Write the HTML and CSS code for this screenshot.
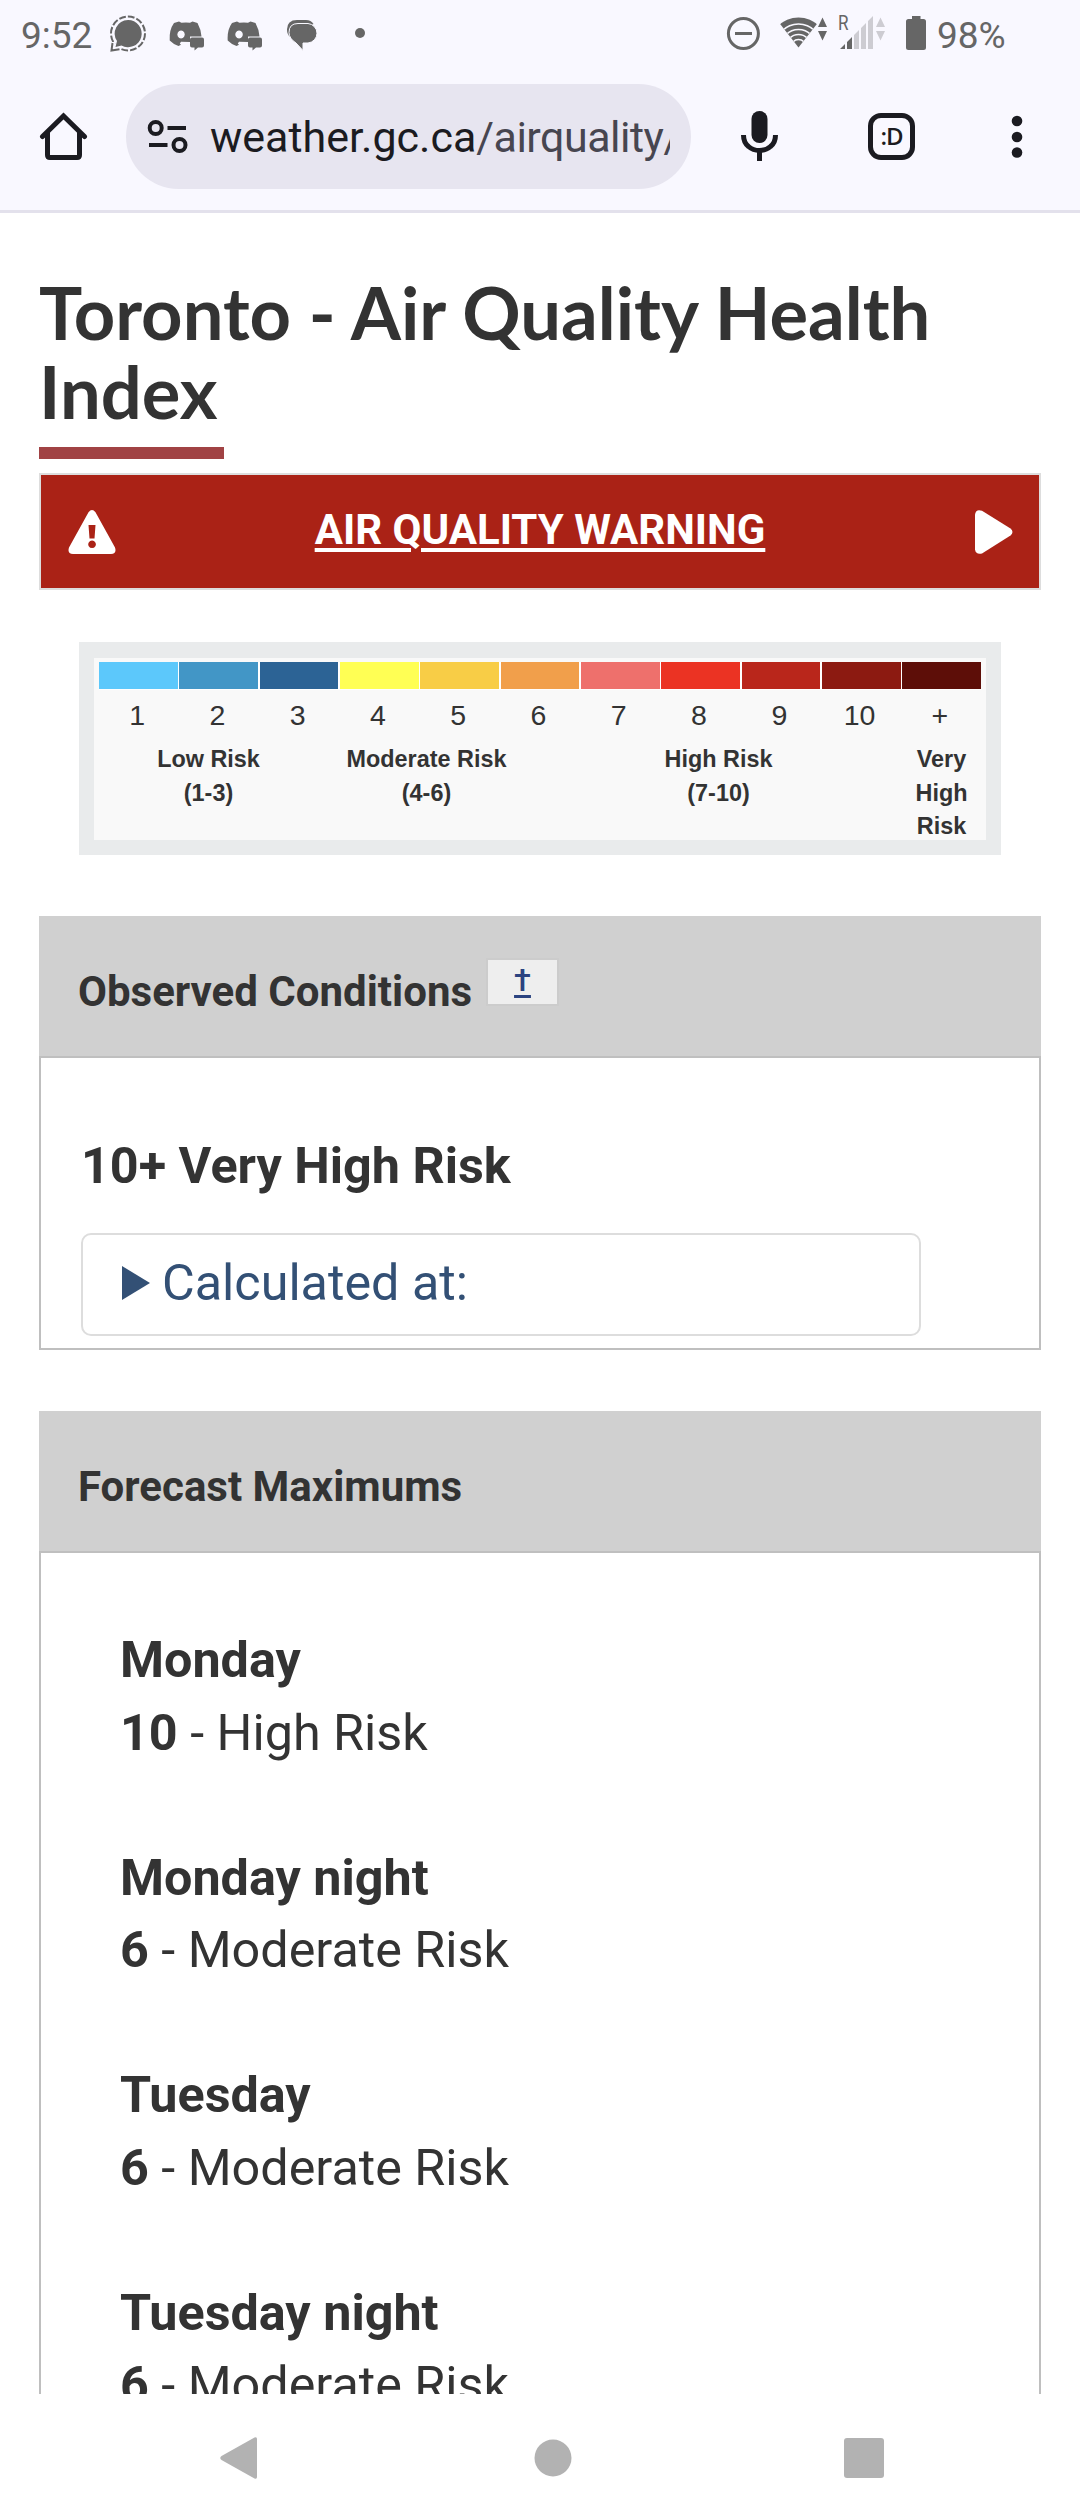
FILE: index.html
```html
<!DOCTYPE html>
<html lang="en">
<head>
    <meta charset="UTF-8">
    <meta name="viewport" content="width=device-width, initial-scale=1.0">
    <title>Toronto - Air Quality Health Index</title>
    <link rel="stylesheet" href="styles.css">
</head>
<body>
    <header class="browser">
        <div class="status-bar">
            <span class="clock">9:52</span>
            <svg class="status-left" width="260" height="44" viewBox="108 12 260 44">
                <!-- Signal -->
                <path d="M128 20a13.600 13.600 0 1 1-6.500 25.500l-6 1.600 1.500-6A13.600 13.600 0 0 1 128 20z"/>
                <circle cx="128" cy="33.500" r="17" fill="none" stroke="#666" stroke-width="2" stroke-dasharray="6.800 2.100" pathLength="107" mask="url(#tail)"/>
                <mask id="tail" maskUnits="userSpaceOnUse" x="108" y="12" width="44" height="44"><path fill="#fff" d="M108 12h44v44h-30l-2-9-6-5h-6z"/></mask>
                <path d="M112.500 43l-1 7.500 8-1.200" fill="none" stroke="#666" stroke-width="2"/>
                <!-- Discord -->
                <g id="discord">
                    <path fill-rule="evenodd" d="M179 21.500l2.500 1.300q4.500-.8 8.500 0l2.500-1.300 5 1.600q3.500 6.500 4 13.400H190v5.500l-9-.2-1.200 1.700 1.200 1.200-2.500 1.300q-5.500-2-8.800-5.500-.7-10.500 4.300-17.400zM181 30.500a3.700 4 0 1 0 .1 0z"/>
                    <path d="M192 37.500h10q2 0 2 2v6q0 2-2 2h-4l-3.500 3v-3H192q-2 0-2-2v-6q0-2 2-2z"/>
                </g>
                <use href="#discord" x="58"/>
                <!-- Messages -->
                <path d="M297 20h9q5 0 7.500 4L290 37q-3-3-3-7.500Q287 20 297 20z"/>
                <path d="M298 23.500h10a10 9.800 0 0 1 0 19.500h-5v7.500l-7-7.500q-7-4.500-7-10.500 0-9 9-9z" stroke="#f9f8ff" stroke-width="1"/>
                <circle cx="360" cy="33" r="5"/>
            </svg>
            <svg class="status-right" width="200" height="44" viewBox="726 8 200 44">
                <circle cx="743.400" cy="33.500" r="15" fill="none" stroke="#666" stroke-width="3"/>
                <path d="M735 32h17v3h-17z"/>
                <!-- Wifi -->
                <clipPath id="fan"><path d="M780.500 24.500L798.500 47.500l18-23V14h-36z"/></clipPath>
                <g clip-path="url(#fan)">
                    <circle cx="798.500" cy="47" r="29.500"/>
                    <g fill="none" stroke="#f9f8ff" stroke-width="1.600">
                        <circle cx="798.500" cy="47" r="23"/>
                        <circle cx="798.500" cy="47" r="17.500"/>
                        <circle cx="798.500" cy="47" r="12.500"/>
                        <circle cx="798.500" cy="47" r="7.500"/>
                    </g>
                </g>
                <path d="M818 27l4.500-9.500L827 27zM818 31h9l-4.500 9.500z"/>
                <text class="roaming" x="838" y="30" textLength="10.500" lengthAdjust="spacingAndGlyphs">R</text>
                <!-- Cell signal -->
                <path d="M840 49l5-5v5zM847 49V42l5-5v12z"/>
                <g fill="#cdccd2">
                    <path d="M854 49V35l5-5v19zM861 49V28l5-5v26zM868 49V21l5-5v33z"/>
                    <path d="M876 27l4.500-9.500L885 27zM876 31h9l-4.500 9.500z"/>
                </g>
                <path d="M912 16h8.500v3h3q2.500 0 2.500 2.500V47.500q0 2.500-2.500 2.500h-15q-2.500 0-2.500-2.500v-26q0-2.500 2.500-2.500h3.500z"/>
            </svg>
            <span class="battery">98%</span>
        </div>
        <div class="toolbar">
            <svg class="home" width="50" height="50" viewBox="38 112 50 50">
                <path d="M42.500 136.500L63.500 116 84.500 136.500M47.500 133v22q0 2.500 2.500 2.500h27q2.500 0 2.500-2.500v-22"/>
            </svg>
            <div class="address">
                <svg class="tune" width="42" height="36" viewBox="147 119 42 36">
                    <circle cx="155.700" cy="128" r="6"/>
                    <circle cx="179.500" cy="145" r="6"/>
                    <path d="M167.500 128H186M149 145h18.500"/>
                </svg>
                <div class="url">weather.gc.ca<span class="path">/airquality/</span></div>
            </div>
            <svg class="mic" width="40" height="52" viewBox="740 110 40 52">
                <rect x="751.500" y="110" width="16" height="32" rx="8"/>
                <path d="M743.500 134q0 7.500 5 11.500 4.500 4 11 4t11-4q5-4 5-11.500M759.500 149v11" fill="none" stroke="#1b1b21" stroke-width="5"/>
            </svg>
            <div class="tabs">:D</div>
            <svg class="more" width="12" height="44" viewBox="0 0 12 44">
                <circle cx="6" cy="6" r="5.300"/>
                <circle cx="6" cy="22" r="5.300"/>
                <circle cx="6" cy="37.500" r="5.300"/>
            </svg>
        </div>
    </header>

    <main class="page">
        <h1>Toronto - Air Quality Health Index</h1>

        <a class="alert" href="#">
            <svg width="48" height="44" viewBox="0 0 48 44">
                <path fill="#fff" fill-rule="evenodd" d="M20.500 2.200q3.500-4.200 7 0L47 37.500q2 6-4 6.500H5q-6-.5-4-6.500zM20.500 15l1 13.500h5l1-13.500zM24 30.500a3.800 3.800 0 1 0 .1 0z"/>
            </svg>
            <span>AIR QUALITY WARNING</span>
            <svg width="38" height="44" viewBox="0 0 38 44">
                <path fill="#fff" d="M0 4.500Q1-1.500 7 .8L35.500 18.500q4 3.500 0 7L7 43.500Q1 45 0 39.500z"/>
            </svg>
        </a>

        <div class="scale">
            <div class="colours">
                <i class="c1"></i><i class="c2"></i><i class="c3"></i><i class="c4"></i><i class="c5"></i><i class="c6"></i><i class="c7"></i><i class="c8"></i><i class="c9"></i><i class="c10"></i><i class="c11"></i>
            </div>
            <div class="numbers">
                <span>1</span><span>2</span><span>3</span><span>4</span><span>5</span><span>6</span><span>7</span><span>8</span><span>9</span><span>10</span><span>+</span>
            </div>
            <div class="risks">
                <div>Low Risk<br>(1-3)</div>
                <div>Moderate Risk<br>(4-6)</div>
                <div>High Risk<br>(7-10)</div>
                <div>Very<br>High<br>Risk</div>
            </div>
        </div>

        <section class="panel observed">
            <h2>Observed Conditions <a class="note" href="#">†</a></h2>
            <div class="panel-body">
                <p class="current">10+ Very High Risk</p>
                <div class="calculated">
                    <svg width="28" height="34" viewBox="0 0 28 34"><path fill="#335075" d="M0 0l28 17L0 34z"/></svg>
                    Calculated at:
                </div>
            </div>
        </section>

        <section class="panel forecast">
            <h2>Forecast Maximums</h2>
            <dl class="panel-body">
                <dt>Monday</dt>
                <dd><b>10</b> - High Risk</dd>
                <dt>Monday night</dt>
                <dd><b>6</b> - Moderate Risk</dd>
                <dt>Tuesday</dt>
                <dd><b>6</b> - Moderate Risk</dd>
                <dt>Tuesday night</dt>
                <dd><b>6</b> - Moderate Risk</dd>
            </dl>
        </section>
    </main>

    <nav class="nav-bar">
        <svg width="38" height="42" viewBox="0 0 38 42"><path d="M34.500.5q2.500-1 2.500 1.500v38q0 2.500-2.500 1.500L1.500 23q-2.500-2 0-4z"/></svg>
        <svg width="38" height="38" viewBox="0 0 38 38"><circle cx="19" cy="19" r="18.500"/></svg>
        <svg width="40" height="40" viewBox="0 0 40 40"><rect width="40" height="40" rx="3"/></svg>
    </nav>
</body>
</html>
```
FILE: styles.css
```css
* {
    box-sizing: border-box;
}

body {
    margin: 0;
    height: 2520px;
    display: flex;
    flex-direction: column;
    overflow: hidden;
    font-family: Roboto, sans-serif;
    color: #333;
    background-color: #fff;
}

svg {
    display: block;
    flex: none;
}

/* Status bar and address bar */
.browser {
    flex: none;
    height: 213px;
    background-color: #f9f8ff;
    border-bottom: 3px solid #e3e1ec;
}

.status-bar {
    display: flex;
    height: 70px;
    padding-left: 21px;
    fill: #666;
    color: #666;
    font-size: 37px;
    line-height: 71px;
    white-space: nowrap;
}

.clock {
    width: 87px;
}

.status-left {
    margin-top: 12px;
}

.status-right {
    margin: 8px 0 0 358px;
}

.roaming {
    font-size: 21px;
}

.battery {
    margin-left: 11px;
}

.toolbar {
    display: flex;
    align-items: center;
    height: 105px;
    margin-top: 14px;
    padding-left: 38px;
}

.home {
    fill: none;
    stroke: #1b1b21;
    stroke-width: 5;
    stroke-linecap: round;
}

.address {
    display: flex;
    align-items: center;
    width: 565px;
    height: 105px;
    margin-left: 38px;
    padding-left: 21px;
    background-color: #e7e5f0;
    border-radius: 53px;
}

.tune {
    fill: none;
    stroke: #1b1b21;
    stroke-width: 4;
}

.url {
    width: 460px;
    margin-left: 21px;
    overflow: hidden;
    white-space: nowrap;
    font-size: 43px;
    color: #1b1b21;
}

.path {
    color: #474650;
    letter-spacing: -0.5px;
}

.mic {
    margin-left: 49px;
    fill: #1b1b21;
}

.tabs {
    width: 47px;
    height: 47px;
    margin-left: 88px;
    border: 5px solid #1b1b21;
    border-radius: 13px;
    color: #1b1b21;
    font: 600 24px/36px "Open Sans", sans-serif;
    letter-spacing: -1px;
    text-align: center;
}

.more {
    margin-left: 96px;
    fill: #1b1b21;
}

/* Page */
.page {
    flex: 1;
    min-height: 0;
    padding: 60px 39px 0;
    overflow: hidden;
}

h1 {
    margin: 0 0 14px;
    font: bold 72.3px/79px Lato, sans-serif;
}

h1::after {
    content: "";
    display: block;
    width: 185px;
    height: 12px;
    margin-top: 16px;
    background-color: #a14244;
}

.alert {
    display: flex;
    align-items: center;
    justify-content: space-between;
    height: 117px;
    padding: 0 26px 0 27px;
    border: 2px solid #ddd;
    background-color: #aa2216;
    color: #fff;
    font-size: 42px;
    font-weight: bold;
    text-underline-offset: 4px;
    text-decoration-thickness: 4px;
}

.alert span {
    margin-right: 11px;
    padding-bottom: 4px;
}

/* Index scale */
.scale {
    width: 922px;
    height: 213px;
    margin: 52px 40px 61px;
    padding: 4px 5px 0;
    border: solid #e9ebec;
    border-width: 16px 15px 15px;
    background-color: #f9f9f9;
    font-family: "Liberation Sans", sans-serif;
}

.colours,
.numbers {
    display: grid;
    grid-template-columns: repeat(11, 1fr);
}

.colours {
    gap: 1.5px;
    height: 28px;
    border-bottom: 1px solid #fff;
    background-color: #fff;
}

.c1 { background-color: #5cc8fb; }
.c2 { background-color: #4296c6; }
.c3 { background-color: #2c6395; }
.c4 { background-color: #ffff54; }
.c5 { background-color: #f8cd46; }
.c6 { background-color: #f19f4b; }
.c7 { background-color: #ee706c; }
.c8 { background-color: #eb3323; }
.c9 { background-color: #b9261b; }
.c10 { background-color: #8c1a11; }
.c11 { background-color: #5d0e08; }

.numbers {
    margin: 8px 1px 0 -2px;
    font-size: 28.5px;
    line-height: 34px;
    text-align: center;
}

.risks {
    display: grid;
    grid-template-columns: 219px 217px 367px 79px;
    margin-top: 11px;
    font-size: 23.4px;
    font-weight: bold;
    line-height: 33.5px;
    text-align: center;
}

/* Panels */
.panel {
    border: 2px solid #bfbfbf;
    border-top: none;
}

.observed {
    height: 434px;
    margin-bottom: 61px;
}

.forecast {
    height: 1200px;
}

.panel h2 {
    height: 142px;
    margin: 0 -2px;
    padding: 46px 40px 0 39px;
    border-bottom: 2px solid #bfbfbf;
    background-color: #d0d0d0;
    font-size: 42px;
    line-height: 60px;
    display: flex;
}

.note {
    width: 73px;
    height: 48px;
    margin: -4px 0 0 14px;
    border: 2px solid #ccc;
    background-color: #eee;
    color: #2b4380;
    font-size: 31px;
    font-weight: 500;
    line-height: 42px;
    text-align: center;
    text-underline-offset: 4px;
    text-decoration-thickness: 3px;
}

.observed .panel-body {
    padding: 72px 40px 0;
}

.current {
    margin: 0 0 31px;
    font-size: 50.3px;
    font-weight: bold;
    line-height: 72px;
}

.calculated {
    display: flex;
    align-items: center;
    gap: 12px;
    width: 840px;
    height: 103px;
    padding: 0 0 4px 39px;
    border: 2px solid #ddd;
    border-radius: 10px;
    color: #335075;
    font-size: 50.3px;
}

.forecast .panel-body {
    margin: 0;
    padding: 71px 80px 0 79px;
    font-size: 50.3px;
    line-height: 72.5px;
}

dt {
    font-weight: bold;
}

dd {
    margin: 0 0 72.5px;
}

/* Android navigation buttons */
.nav-bar {
    flex: none;
    display: grid;
    grid-template-columns: 314px 310px 40px;
    align-items: center;
    height: 126px;
    padding: 2px 0 0 220px;
    fill: #b2b2b2;
    background-color: #fff;
}
```
